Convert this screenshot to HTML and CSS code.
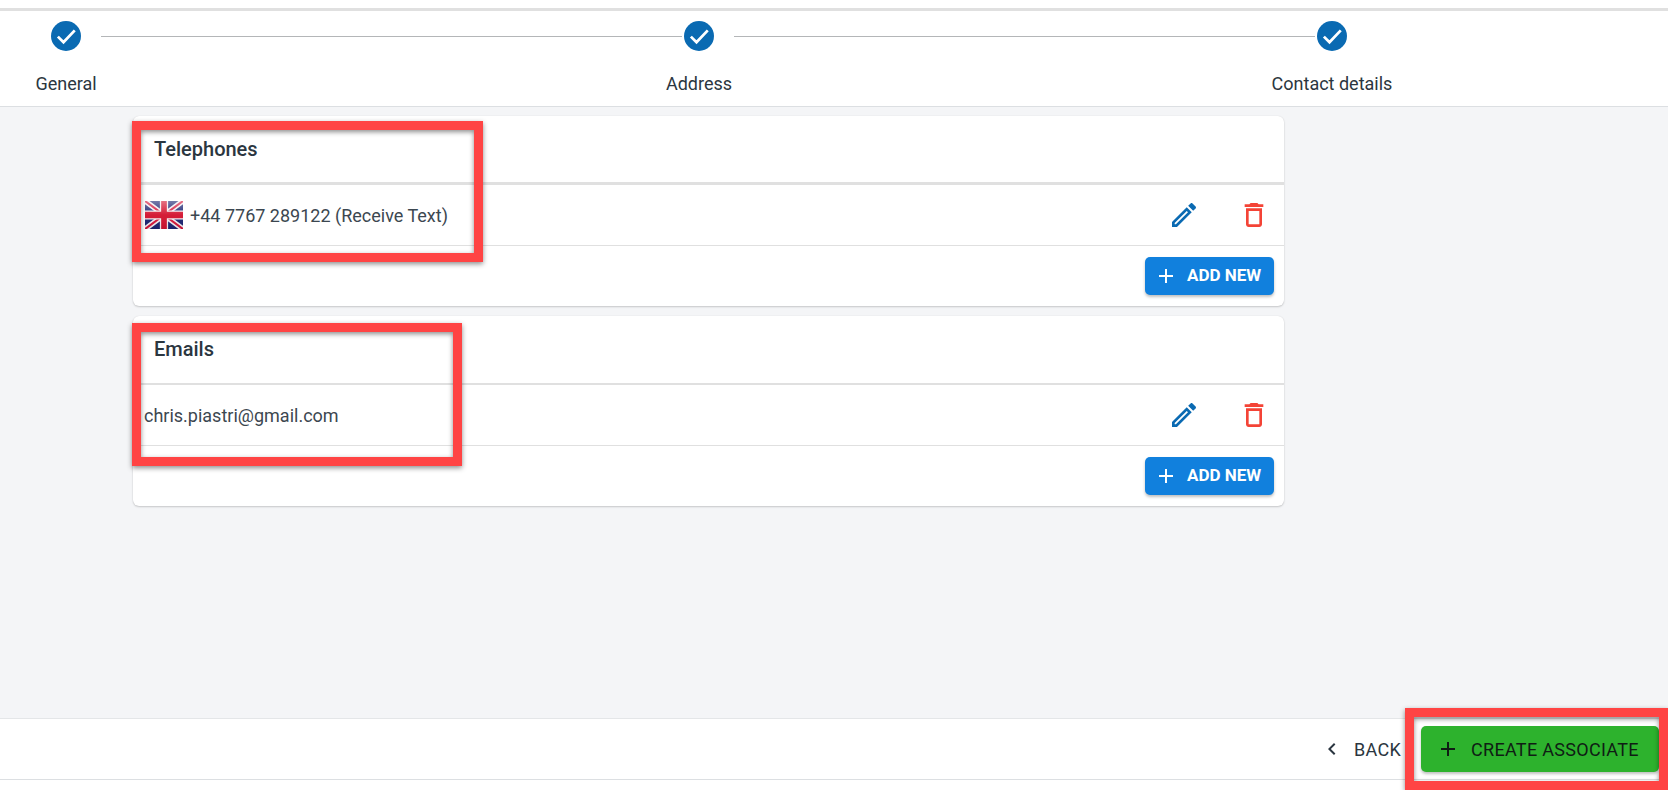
FILE: index.html
```html
<!DOCTYPE html>
<html lang="en">
<head>
<meta charset="utf-8">
<title>Create associate</title>
<link rel="stylesheet" href="styles.css">
</head>
<body>
<div class="page">
  <header class="stepper">
    <div class="step-track">
      <span class="step-dot"><svg viewBox="0 0 24 24" class="check"><path d="M5.5 12.5l4.5 4.5 9-9.5"/></svg></span>
      <span class="step-line"></span>
      <span class="step-dot"><svg viewBox="0 0 24 24" class="check"><path d="M5.5 12.5l4.5 4.5 9-9.5"/></svg></span>
      <span class="step-line"></span>
      <span class="step-dot"><svg viewBox="0 0 24 24" class="check"><path d="M5.5 12.5l4.5 4.5 9-9.5"/></svg></span>
    </div>
    <div class="step-labels">
      <span class="step-label">General</span>
      <span class="step-label">Address</span>
      <span class="step-label">Contact details</span>
    </div>
  </header>

  <main class="content">
    <section class="card">
      <h2 class="card-title title-thick">Telephones</h2>
      <div class="card-row">
        <div class="row-value">
          <svg class="flag" viewBox="0 0 60 40" preserveAspectRatio="none">
            <defs>
              <linearGradient id="gloss" x1="0" y1="0" x2="0" y2="1">
                <stop offset="0" stop-color="#fff" stop-opacity=".4"/>
                <stop offset=".5" stop-color="#fff" stop-opacity=".04"/>
                <stop offset="1" stop-color="#000" stop-opacity=".08"/>
              </linearGradient>
            </defs>
            <rect width="60" height="40" fill="#1b2472"/>
            <path d="M0 0L60 40M60 0L0 40" stroke="#f3eef2" stroke-width="8"/>
            <path d="M0 0L60 40M60 0L0 40" stroke="#d5163a" stroke-width="3.2"/>
            <path d="M30 0V40M0 20H60" stroke="#f5f0f2" stroke-width="13"/>
            <path d="M30 0V40M0 20H60" stroke="#d3132f" stroke-width="9"/>
            <rect width="60" height="40" fill="url(#gloss)"/>
          </svg>
          <span>+44 7767 289122 (Receive Text)</span>
        </div>
        <div class="row-actions">
          <svg class="icon-lg icon-edit" viewBox="0 0 24 24"><path d="M3 17.25V21h3.75L17.81 9.94l-3.75-3.75L3 17.25zM5.92 19H5v-.92l9.06-9.06.92.92L5.92 19zM20.71 5.63l-2.34-2.34c-.2-.2-.45-.29-.71-.29s-.51.1-.7.29l-1.83 1.83 3.75 3.75 1.83-1.83c.39-.39.39-1.02 0-1.41z"/></svg>
          <svg class="icon-lg icon-delete" viewBox="0 0 24 24"><path d="M16 9v10H8V9h8m-1.5-6h-5l-1 1H5v2h14V4h-3.5l-1-1zM18 7H6v12c0 1.1.9 2 2 2h8c1.1 0 2-.9 2-2V7z"/></svg>
        </div>
      </div>
      <div class="card-foot">
        <button class="btn-add"><svg class="icon-plus" viewBox="0 0 24 24"><path d="M19 13h-6v6h-2v-6H5v-2h6V5h2v6h6v2z"/></svg><span class="btn-add-label">ADD NEW</span></button>
      </div>
    </section>

    <section class="card">
      <h2 class="card-title">Emails</h2>
      <div class="card-row">
        <div class="row-value"><span>chris.piastri@gmail.com</span></div>
        <div class="row-actions">
          <svg class="icon-lg icon-edit" viewBox="0 0 24 24"><path d="M3 17.25V21h3.75L17.81 9.94l-3.75-3.75L3 17.25zM5.92 19H5v-.92l9.06-9.06.92.92L5.92 19zM20.71 5.63l-2.34-2.34c-.2-.2-.45-.29-.71-.29s-.51.1-.7.29l-1.83 1.83 3.75 3.75 1.83-1.83c.39-.39.39-1.02 0-1.41z"/></svg>
          <svg class="icon-lg icon-delete" viewBox="0 0 24 24"><path d="M16 9v10H8V9h8m-1.5-6h-5l-1 1H5v2h14V4h-3.5l-1-1zM18 7H6v12c0 1.1.9 2 2 2h8c1.1 0 2-.9 2-2V7z"/></svg>
        </div>
      </div>
      <div class="card-foot">
        <button class="btn-add"><svg class="icon-plus" viewBox="0 0 24 24"><path d="M19 13h-6v6h-2v-6H5v-2h6V5h2v6h6v2z"/></svg><span class="btn-add-label">ADD NEW</span></button>
      </div>
    </section>
  </main>

  <footer class="actions">
    <button class="btn-back"><svg class="icon-chev" viewBox="0 0 24 24"><path d="M15.41 7.41L14 6l-6 6 6 6 1.41-1.41L10.83 12z"/></svg><span>BACK</span></button>
    <button class="btn-create"><svg class="icon-plus-dark" viewBox="0 0 24 24"><path d="M19 13h-6v6h-2v-6H5v-2h6V5h2v6h6v2z"/></svg><span>CREATE ASSOCIATE</span></button>
  </footer>

  <div class="mark mark-phone"></div>
  <div class="mark mark-email"></div>
  <div class="mark mark-create"></div>
</div>
</body>
</html>
```
FILE: styles.css
```css
* { box-sizing: border-box; }
html, body { margin: 0; padding: 0; height: 100%; overflow: hidden; background: #fff; }
body { font-family: Roboto, "Liberation Sans", sans-serif; color: #2b3640; }
.page { position: relative; width: 1668px; height: 790px; display: flex; flex-direction: column; padding-top: 8px; padding-bottom: 10px; background: #fff; }

.stepper { height: 99px; border-top: 3px solid #e0e0e0; border-bottom: 1px solid #dcdfe2; background: #fff; padding-top: 10px; flex: none; }
.step-track { display: flex; align-items: center; padding-left: 51px; height: 30px; }
.step-dot { width: 30px; height: 30px; border-radius: 50%; background: #0a6ab2; display: flex; align-items: center; justify-content: center; flex: none; }
.check { width: 30px; height: 30px; fill: none; stroke: #fff; stroke-width: 2.2; }
.step-line { width: 581px; height: 1px; background: #b4b6b8; margin: 0 2px 0 20px; flex: none; }
.step-labels { display: flex; gap: 503px; padding-left: 1px; margin-top: 21px; }
.step-label { width: 130px; text-align: center; font-size: 18px; line-height: 24px; white-space: nowrap; }

.content { flex: 1; background: #f4f5f7; padding: 9px 0 0 133px; display: flex; flex-direction: column; gap: 10px; }
.card { width: 1151px; height: 190px; background: #fff; border-radius: 6px; box-shadow: 0 1px 2px rgba(0,0,0,.18), 0 0 1px rgba(0,0,0,.12); display: flex; flex-direction: column; }
.card-title { margin: 0; height: 69px; padding: 21px 0 0 21px; font-size: 20px; line-height: 24px; font-weight: 500; color: #2b3640; border-bottom: 2px solid #e0e0e0; flex: none; }
.title-thick { border-bottom-width: 3px; }
.card-row { flex: 1; display: flex; align-items: center; justify-content: space-between; border-bottom: 1px solid #e0e0e0; padding: 0 14px 0 11px; }
.row-value { display: flex; align-items: center; gap: 7px; font-size: 18px; color: #3c4750; }
.flag { width: 38px; height: 28px; display: block; margin-left: 1px; }
.row-actions { display: flex; gap: 38px; }
.icon-lg { width: 32px; height: 32px; display: block; }
.icon-edit { fill: #0a6ab2; }
.icon-delete { fill: #f44336; }
.card-foot { height: 60px; flex: none; display: flex; justify-content: flex-end; align-items: flex-start; padding: 11px 10px 0 0; }
.btn-add { width: 129px; height: 38px; border: 0; border-radius: 5px; background: #1180dd; color: #fff; display: flex; align-items: center; padding: 0 0 0 9px; font: 700 17px Roboto, sans-serif; box-shadow: 0 2px 3px rgba(0,0,0,.25); }
.btn-add-label { padding-bottom: 2px; }
.icon-plus { width: 24px; height: 24px; fill: #fff; margin-right: 9px; }

.actions { height: 62px; flex: none; background: #fff; border-top: 1px solid #e4e6e8; border-bottom: 1px solid #dcdfe2; display: flex; justify-content: flex-end; align-items: center; padding-right: 9px; gap: 20px; }
.btn-back { border: 0; background: none; display: flex; align-items: center; gap: 10px; padding: 0; color: #2b3640; font: 400 18px Roboto, sans-serif; letter-spacing: .3px; }
.icon-chev { width: 24px; height: 24px; fill: #2b3640; }
.btn-create { width: 238px; height: 46px; border: 0; border-radius: 5px; background: #2db22d; color: #0f1d14; display: flex; align-items: center; padding: 0 0 0 15px; font: 400 18px Roboto, sans-serif; letter-spacing: .3px; box-shadow: 0 2px 3px rgba(0,0,0,.25); }
.icon-plus-dark { width: 24px; height: 24px; fill: #0f1d14; margin-right: 11px; }

.mark { position: absolute; border: 9px solid #ff4444; box-shadow: 0 2px 5px rgba(0,0,0,.45), inset 0 2px 5px rgba(0,0,0,.45); }
.mark-phone { left: 132px; top: 121px; width: 351px; height: 141px; }
.mark-email { left: 132px; top: 323px; width: 330px; height: 143px; }
.mark-create { left: 1405px; top: 708px; width: 263px; height: 82px; }
```
